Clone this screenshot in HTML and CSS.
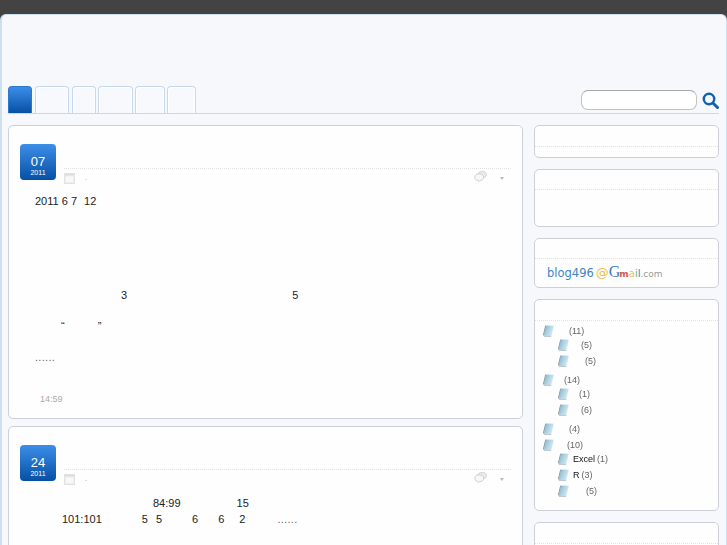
FILE: index.html
```html
<!DOCTYPE html>
<html lang="zh">
<head>
<meta charset="utf-8">
<title>blog496</title>
<link rel="stylesheet" href="styles.css">
</head>
<body>
<svg class="defs" width="0" height="0" aria-hidden="true">
  <defs>
    <linearGradient id="book" x1="0" y1="0" x2="1" y2="0.4">
      <stop offset="0" stop-color="#7fa9bc"/>
      <stop offset="0.5" stop-color="#a9d0e0"/>
      <stop offset="1" stop-color="#d4e9f2"/>
    </linearGradient>
    <symbol id="i-book" viewBox="0 0 11 12">
      <path d="M3 .5 10.8 .8 8.4 10.8 .6 10.8Z" fill="url(#book)"/>
      <path d="M3 .5 .6 10.8 0 10 2.2 .8Z" fill="#6f8996"/>
      <path d="M.6 10.8 8.4 10.8 8.1 11.8 1 11.8Z" fill="#a9b8bf"/>
    </symbol>
    <symbol id="i-cal" viewBox="0 0 11 11">
      <rect x=".5" y=".5" width="10" height="10" fill="#eeeeee" stroke="#e2e2e2"/>
      <rect x="1" y="1" width="9" height="1.5" fill="#dddddd"/>
      <rect x="2" y="3.5" width="7" height="5.5" fill="#f8f8f8"/>
    </symbol>
    <symbol id="i-talk" viewBox="0 0 13 12">
      <ellipse cx="8.2" cy="3.6" rx="4.2" ry="3.1" fill="#ececec" stroke="#d2d2d2"/>
      <ellipse cx="5.2" cy="6.2" rx="4.4" ry="3.4" fill="#f7f7f7" stroke="#cfcfcf"/>
      <path d="M3.6 9.2 4.4 11.8 6.4 9.4Z" fill="#e6e6e6"/>
    </symbol>
  </defs>
</svg>
<div class="topbar"></div>
<div class="shell">
  <header class="masthead">
    <nav class="tabs">
      <a class="tab tab-home is-active"></a>
      <a class="tab tab-a"></a>
      <a class="tab tab-b"></a>
      <a class="tab tab-c"></a>
      <a class="tab tab-d"></a>
      <a class="tab tab-e"></a>
      <form class="search">
        <input class="search-input" type="text" aria-label="search">
        <svg class="search-icon" viewBox="0 0 16 16" aria-hidden="true">
          <circle cx="6.6" cy="6.6" r="4.9" fill="none" stroke="#0f62b0" stroke-width="2.3"/>
          <path d="M10.3 10.3 14.6 14.6" stroke="#0f62b0" stroke-width="2.8" stroke-linecap="round"/>
        </svg>
      </form>
    </nav>
  </header>
  <div class="columns">
    <main class="posts">
      <article class="post post-first">
        <div class="post-head">
          <div class="date"><span class="day">07</span><span class="year">2011</span></div>
          <div class="head-main">
            <div class="title"></div>
            <div class="meta">
              <svg class="cal"><use href="#i-cal"/></svg><span class="dot">.</span>
              <svg class="talk"><use href="#i-talk"/></svg><span class="arrow"></span>
            </div>
          </div>
        </div>
        <div class="body">
          <p class="line l-date">2011 6 7<span class="sp s7"></span>12</p>
          <p class="line l-nums"><span class="sp s86"></span>3<span class="sp s165"></span>5</p>
          <p class="line l-quote"><span class="sp s26"></span>“<span class="sp s33"></span>”</p>
          <p class="line l-more"><span class="dots">......</span></p>
        </div>
        <div class="time">14:59</div>
      </article>
      <article class="post">
        <div class="post-head">
          <div class="date"><span class="day">24</span><span class="year">2011</span></div>
          <div class="head-main">
            <div class="title"></div>
            <div class="meta">
              <svg class="cal"><use href="#i-cal"/></svg><span class="dot">.</span>
              <svg class="talk"><use href="#i-talk"/></svg><span class="arrow"></span>
            </div>
          </div>
        </div>
        <div class="body">
          <p class="line l-p2a"><span class="sp s118"></span>84:99<span class="sp s56"></span>15</p>
          <p class="line l-p2b"><span class="sp s27"></span>101:101<span class="sp s40"></span>5<span class="sp s8"></span>5<span class="sp s30"></span>6<span class="sp s20"></span>6<span class="sp s15"></span>2<span class="sp s32"></span><span class="dots">......</span></p>
        </div>
      </article>
    </main>
    <aside class="side">
      <section class="widget w-one"><div class="w-title"></div></section>
      <section class="widget w-two"><div class="w-title"></div></section>
      <section class="widget w-three">
        <div class="w-title"></div>
        <div class="mail"><span class="m-name">blog496</span><span class="m-at">@</span><span class="m-g">G</span><span class="m-r">m</span><span class="m-y">a</span><span class="m-gr">i</span><span class="m-b">l</span><span class="m-com">.com</span></div>
      </section>
      <section class="widget w-four">
        <div class="w-title"></div>
        <ul class="tree">
          <li><svg class="book"><use href="#i-book"/></svg><span class="cnt c16">(11)</span>
            <ul>
              <li><svg class="book"><use href="#i-book"/></svg><span class="cnt c13">(5)</span></li>
              <li><svg class="book"><use href="#i-book"/></svg><span class="cnt c17">(5)</span></li>
            </ul>
          </li>
          <li><svg class="book"><use href="#i-book"/></svg><span class="cnt c11">(14)</span>
            <ul>
              <li><svg class="book"><use href="#i-book"/></svg><span class="cnt c11">(1)</span></li>
              <li><svg class="book"><use href="#i-book"/></svg><span class="cnt c13">(6)</span></li>
            </ul>
          </li>
          <li><svg class="book"><use href="#i-book"/></svg><span class="cnt c16">(4)</span></li>
          <li class="tight"><svg class="book"><use href="#i-book"/></svg><span class="cnt c14">(10)</span>
            <ul>
              <li><svg class="book"><use href="#i-book"/></svg><a class="cat">Excel</a> <span class="cnt">(1)</span></li>
              <li><svg class="book"><use href="#i-book"/></svg><a class="cat">R</a> <span class="cnt">(3)</span></li>
              <li><svg class="book"><use href="#i-book"/></svg><span class="cnt c18">(5)</span></li>
            </ul>
          </li>
        </ul>
      </section>
      <section class="widget w-five"><div class="w-title"></div></section>
    </aside>
  </div>
</div>
</body>
</html>
```
FILE: styles.css
```css
* { box-sizing: border-box; }
html, body { margin: 0; padding: 0; height: 545px; overflow: hidden; }
body { background: #434343; font-family: "Liberation Sans", Arial, sans-serif; font-size: 11px; color: #222; }
.defs { position: absolute; }
.topbar { height: 14px; background: #434343; }

.shell {
  background: #f6f8fc;
  border: 1px solid #cde0f0;
  border-bottom: 0;
  border-left-width: 2px;
  border-radius: 6px 6px 0 0;
  padding: 0 7px 0 6px;
  height: 531px;
  overflow: hidden;
  filter: blur(0.45px);
}

.masthead { padding-top: 71px; }
.tabs { display: flex; align-items: flex-end; height: 28px; border-bottom: 1px solid #c4d9ee; }
.tab {
  display: block;
  height: 27px;
  margin-right: 2px;
  border: 1px solid #c4d9ee;
  border-bottom: 0;
  border-radius: 4px 4px 0 0;
  background: #f7f9fd;
  box-shadow: inset 1px 1px 0 #fff, inset -1px 0 0 #fff;
}
.tab-home { width: 24px; margin-right: 3px; }
.tab-a { width: 34px; margin-right: 3px; }
.tab-b { width: 24px; }
.tab-c { width: 35px; }
.tab-d { width: 30px; }
.tab-e { width: 29px; }
.tab.is-active { border-color: #2a78cc; background: linear-gradient(#3d8ee8, #0650a4); box-shadow: none; }

.search { display: flex; align-items: center; margin-left: auto; align-self: flex-start; padding-top: 4px; }
.search-input {
  width: 116px;
  height: 20px;
  padding: 0 6px;
  border: 1px solid #c2c2c2;
  border-top-color: #a8a8a8;
  border-radius: 7px;
  background: #fff;
  outline: 0;
}
.search-icon { width: 17px; height: 17px; margin: 1px 0 0 5px; display: block; }

.columns { display: flex; align-items: flex-start; margin-top: 11px; gap: 11px; }
.posts { width: 515px; flex: none; }
.side { width: 185px; flex: none; }

.post {
  background: #fefeff;
  border: 1px solid #cdd0d8;
  border-radius: 5px;
  padding: 18px 11px 0;
  height: 294px;
}
.post-first { margin-bottom: 7px; }

.post-head { display: flex; align-items: flex-start; gap: 8px; }
.date {
  width: 36px;
  height: 36px;
  flex: none;
  display: flex;
  flex-direction: column;
  align-items: center;
  padding-top: 10px;
  border-radius: 4px;
  background: linear-gradient(#3d8ee8, #0650a4);
  color: #fff;
}
.day { font-size: 13px; line-height: 15px; }
.year { font-size: 7px; line-height: 8px; }
.head-main { flex: 1; }
.title { height: 25px; border-bottom: 1px dotted #e2e2e6; }
.meta { display: flex; align-items: center; height: 15px; padding-top: 3px; }
.cal { width: 11px; height: 11px; }
.dot { margin-left: 10px; font-size: 8px; color: #999; line-height: 8px; }
.talk { width: 13px; height: 12px; margin-left: auto; margin-right: 13px; margin-top: -3px; }
.arrow { width: 0; height: 0; margin-right: 7px; border: 2px solid transparent; border-top: 3px solid #bbb; border-bottom: 0; }

.body { padding-left: 15px; }
.line { margin: 0; line-height: 14px; white-space: pre; }
.l-date { margin-top: 10px; }
.l-nums { margin-top: 80px; }
.l-quote { margin-top: 17px; }
.l-more { margin-top: 17px; }
.l-p2a { margin-top: 11px; }
.l-p2b { margin-top: 2px; }
.dots { color: #666; letter-spacing: 0.3px; }
.sp { display: inline-block; }
.s7 { width: 7px; }
.s8 { width: 8px; }
.s15 { width: 15px; }
.s20 { width: 20px; }
.s26 { width: 26px; }
.s27 { width: 27px; }
.s30 { width: 30px; }
.s32 { width: 32px; }
.s33 { width: 33px; }
.s40 { width: 40px; }
.s56 { width: 56px; }
.s86 { width: 86px; }
.s118 { width: 118px; }
.s165 { width: 165px; }

.time { margin: 29px 0 0 20px; font-size: 9px; line-height: 12px; color: #aaa; }

.widget {
  background: #fefeff;
  border: 1px solid #cdd0d8;
  border-radius: 5px;
  margin-bottom: 11px;
}
.w-title { border-bottom: 1px dotted #e2e2e6; }
.w-one { height: 33px; }
.w-one .w-title { height: 21px; }
.w-two { height: 58px; }
.w-two .w-title { height: 20px; }
.w-three { height: 50px; }
.w-three .w-title { height: 20px; }
.w-four { height: 212px; }
.w-four .w-title { height: 21px; }
.w-five { height: 60px; }
.w-five .w-title { height: 21px; }

.mail { display: flex; align-items: baseline; padding: 5px 0 0 12px; font-family: "DejaVu Sans", sans-serif; font-size: 11.5px; line-height: 16px; }
.m-name { color: #3d85c6; }
.m-at { color: #f2bd3e; font-size: 13px; margin: 0 0 0 2px; }
.m-g { color: #3a7fc4; font-family: "Liberation Serif", serif; font-size: 16px; }
.m-r { color: #d9534f; font-size: 9px; font-weight: bold; margin-left: -1px; }
.m-y { color: #f2c14e; font-size: 10px; }
.m-gr { color: #66b36a; font-size: 10px; }
.m-b { color: #3a7fc4; font-size: 10px; }
.m-com { color: #9a9a9a; font-size: 9px; }

.tree, .tree ul { list-style: none; margin: 0; padding: 0; }
.tree { padding: 2px 0 0 8px; }
.tree ul { margin: -2px 0 3px 15px; }
.tree li { display: flex; flex-wrap: wrap; align-items: center; line-height: 16px; font-size: 9px; min-height: 16px; }
.tree li > ul { flex: 0 0 100%; }
.tree > li.tight > ul { margin-bottom: 0; }
.book { width: 11px; height: 12px; flex: none; margin-right: 4px; }
.cnt { color: #666; white-space: pre; }
.cat { color: #111; margin-right: 2px; }
.c11 { margin-left: 6px; }
.c13 { margin-left: 8px; }
.c14 { margin-left: 9px; }
.c16 { margin-left: 11px; }
.c17 { margin-left: 12px; }
.c18 { margin-left: 13px; }
```
